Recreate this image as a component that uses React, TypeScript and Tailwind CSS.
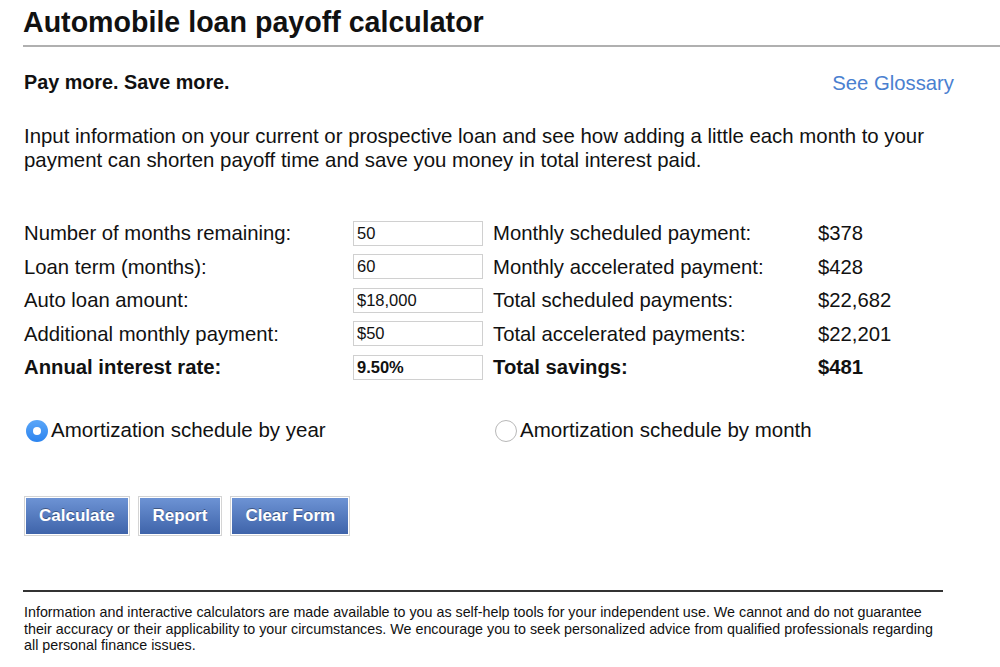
import React, { useState } from 'react';

const rows = [
    { label: 'Number of months remaining:', value: '50', right: 'Monthly scheduled payment:', amount: '$378' },
    { label: 'Loan term (months):', value: '60', right: 'Monthly accelerated payment:', amount: '$428' },
    { label: 'Auto loan amount:', value: '$18,000', right: 'Total scheduled payments:', amount: '$22,682' },
    { label: 'Additional monthly payment:', value: '$50', right: 'Total accelerated payments:', amount: '$22,201' },
    { label: 'Annual interest rate:', value: '9.50%', right: 'Total savings:', amount: '$481', bold: true },
];

const Radio: React.FC<{ checked: boolean; onClick: () => void; label: string }> = ({ checked, onClick, label }) => (
    <label className="flex items-center cursor-pointer" onClick={onClick}>
        {checked ? (
            <span className="w-[22px] h-[22px] rounded-full bg-gradient-to-b from-[#5aa6f8] to-[#2b84ef] flex items-center justify-center">
                <span className="w-[8px] h-[8px] rounded-full bg-white" />
            </span>
        ) : (
            <span className="w-[22px] h-[22px] rounded-full border border-[#b8b8b8] bg-white" />
        )}
        <span className="ml-[3px] text-[20.5px]">{label}</span>
    </label>
);

export default function App() {
    const [byYear, setByYear] = useState(true);

    return (
        <div className="w-[1000px] h-[667px] bg-white text-[#111] font-['Liberation_Sans',Arial,sans-serif] overflow-hidden">
            <h1 className="pl-[23px] pt-[4px] text-[28.6px] font-bold leading-[36px]">Automobile loan payoff calculator</h1>
            <div className="ml-[23px] mt-[5px] h-[2px] bg-[#b0b0b0]" />

            <div className="pl-[24px] pr-[46px] mt-[21px] flex items-center justify-between">
                <span className="text-[19.8px] font-bold">Pay more. Save more.</span>
                <a href="#" className="text-[20.3px] text-[#4a80d0]">See Glossary</a>
            </div>

            <p className="pl-[24px] mt-[26px] w-[976px] text-[20.4px] leading-[24px]">
                Input information on your current or prospective loan and see how adding a little each month to your
                <br />
                payment can shorten payoff time and save you money in total interest paid.
            </p>

            <div className="pl-[24px] mt-[49px] flex flex-col gap-[9.5px]">
                {rows.map((r) => (
                    <div key={r.label} className={`flex items-center h-[24px] text-[20.3px] ${r.bold ? 'font-bold' : ''}`}>
                        <span className="w-[329px]">{r.label}</span>
                        <input
                            defaultValue={r.value}
                            className={`w-[130px] h-[25px] border border-[#d0d0d0] px-[3px] text-[16.5px] outline-none ${r.bold ? 'font-bold' : ''}`}
                        />
                        <span className="ml-[10px] w-[325px]">{r.right}</span>
                        <span>{r.amount}</span>
                    </div>
                ))}
            </div>

            <div className="pl-[26px] mt-[36px] flex items-center">
                <div className="w-[469px]">
                    <Radio checked={byYear} onClick={() => setByYear(true)} label="Amortization schedule by year" />
                </div>
                <Radio checked={!byYear} onClick={() => setByYear(false)} label="Amortization schedule by month" />
            </div>

            <div className="pl-[24px] mt-[50px] flex gap-[8px]">
                {['Calculate', 'Report', 'Clear Form'].map((b) => (
                    <button
                        key={b}
                        className="border border-[#d4d4d4] p-[1px] bg-white"
                    >
                        <span className="block h-[36px] px-[13px] leading-[36px] text-[17px] font-bold text-white bg-gradient-to-b from-[#6d93d4] to-[#3f64aa] [text-shadow:0_-1px_0_rgba(0,0,0,0.35)]">
                            {b}
                        </span>
                    </button>
                ))}
            </div>

            <div className="ml-[23px] mt-[54px] w-[920px] h-[2px] bg-[#333]" />

            <p className="pl-[24px] mt-[12px] w-[940px] text-[14.3px] leading-[16.5px]">
                Information and interactive calculators are made available to you as self-help tools for your independent use. We cannot and do not guarantee
                <br />
                their accuracy or their applicability to your circumstances. We encourage you to seek personalized advice from qualified professionals regarding
                <br />
                all personal finance issues.
            </p>
        </div>
    );
}
